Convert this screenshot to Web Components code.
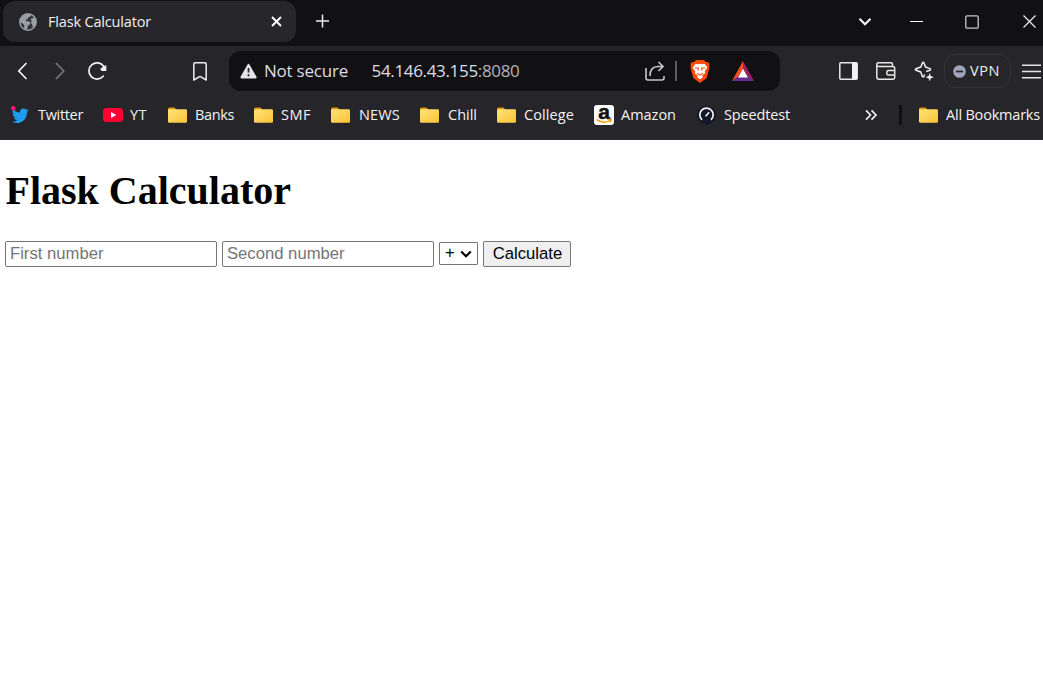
<!DOCTYPE html>
<html lang="en">
<head>
<meta charset="utf-8">
<title>Flask Calculator</title>
<style>
html,body{margin:0;width:100%;height:100%;overflow:hidden;background:#fff}
</style>
</head>
<body>
<browser-window></browser-window>
<script>
const F = '"Open Sans","Noto Sans",sans-serif';
const ICONS = {
globe:[18,18,'<circle cx="9" cy="9" r="8.2" fill="#333539" stroke="#9aa0a6" stroke-width="1.5"/><path d="M1 8.5 3.3 3.5 8 .8 12 1.4 11.8 3.2 9.3 4.2 9 6 7 6.4 7 8.2 10 8.2 11.6 10 10.3 12 8.8 12.4 8.4 15.4 6.8 16.6 5 15.5 5.4 12.5 3.8 10.4 1.6 9.7Z M13 5.3 16 5 17.2 9 15.6 13 13.8 14.6 13.2 11.8 11.8 9.5 12.8 8 11.6 6.6Z" fill="#9aa0a6"/>'],
x:[11,11,'<path d="m1 1 9 9m0-9-9 9" stroke="#fff" stroke-width="1.9"/>'],
plus:[14,14,'<path d="M7.500 .5v13M1 7h13" stroke="#eee" stroke-width="1.5"/>'],
chev:[14,10,'<path d="m1.5 1.8 5.5 5.5 5.5-5.5" fill="none" stroke="#f5f5f5" stroke-width="2.1"/>'],
min:[13,13,'<path d="M0 6.5h13" stroke="#fff"/>'],
max:[14,14,'<rect x=".8" y=".8" width="12.4" height="12.4" rx="1.3" fill="none" stroke="#c8c8c8" stroke-width="1.3"/>'],
close:[13,13,'<path d="m.5.5 12 12m0-12-12 12" stroke="#eee" stroke-width="1.2"/>'],
back:[10,18,'<path d="M9.500 1 1.800 9 9.500 17" fill="none" stroke="#f4f4f4" stroke-width="1.7"/>'],
fwd:[10,18,'<path d="m1 1 7.7 8L1 17" fill="none" stroke="#77777c" stroke-width="1.7"/>'],
reload:[20,20,'<path d="M16.200 15.2A8.100 8.100 0 1 1 16.800 5.500" fill="none" stroke="#f4f4f4" stroke-width="1.7" stroke-linecap="round"/><path d="M18.600 5v4.300h-3.500l-1-1.300Z" fill="#f4f4f4" stroke="#f4f4f4" stroke-width="1.500" stroke-linejoin="round"/>'],
mark:[14,19,'<path d="M.8 18V2Q.8.8 2 .8h10q1.200 0 1.200 1.200V18L7 14.400Z" fill="none" stroke="#eee" stroke-width="1.5" stroke-linejoin="round"/>'],
warn:[17,16,'<path d="M8.500 2 15.500 14.300H1.500Z" fill="#e3e3e8" stroke="#e3e3e8" stroke-width="2.200" stroke-linejoin="round"/><path d="M8.500 5v4.500m0 1.700v2" stroke="#222" stroke-width="1.700"/>'],
share:[20,20,'<path d="M1 7v10q0 2 2 2h14q2 0 2-2v-2" fill="none" stroke="#c9c9cc" stroke-width="1.600"/><path d="M5 15C5 9 8 5.500 13 5.500h5M13.500 1l4.500 4.500-4.500 4.500" fill="none" stroke="#c9c9cc" stroke-width="1.600"/>'],
brave:[20,23,'<path d="M6 0h8l2 2.200 2-.3 1.700 2-.7 2L19.600 7 16.700 18 10 23 3.300 18 .4 7 1 5.900.3 3.900l1.700-2 2 .3Z" fill="#fb4a0c"/><path d="M5.500 3.700 8 4.200 10 3.800l2 .4 2.500-.5 2.800 3.800-2.600 3.700.6 1.900-3.300 2.500L13 17l-3 2.300L7 17l1-1.200-3.300-2.500.6-1.900-2.600-3.700Z" fill="#fff"/><path d="m4.800 7.700 3.600.6-.5 2.400M15.200 7.700l-3.600.6.500 2.400M7 13.200l3 2 3-2" fill="none" stroke="#fb4a0c" stroke-width="1.100"/>'],
bat:[22,20,'<path d="M11 0v7.500L5.500 16.500 0 20Z" fill="#ff4c21"/><path d="m11 0 11 20-5.500-3.500L11 7.500Z" fill="#9e1f63"/><path d="M0 20 5.500 16h11L22 20Z" fill="#662d91"/><path d="m11 7.500 5 9H6Z" fill="#fff"/>'],
panel:[19,18,'<rect x=".8" y=".8" width="17.400" height="16.400" rx="1" fill="none" stroke="#e9e9e5" stroke-width="1.500"/><path d="M13 1h5v16h-5Z" fill="#f0f2f4"/>'],
wallet:[20,18,'<path d="M16.500 4.500V2q0-1.200-1.200-1.200H2.500Q.8.8.8 2.700V15q0 2.200 2.200 2.200h14q1.700 0 1.700-1.700v-9q0-2-1.700-2H2.700Q1 4.500.8 3M19 8.500h-6.500q-1.700 0-1.700 1.700v1.200q0 1.600 1.700 1.600H19" fill="none" stroke="#e9e9e5" stroke-width="1.500"/>'],
spark:[20,20,'<path d="M12.200 10.500 16 9.200q1.200-.8 0-1.600L11.500 6 10 1.900q-.8-1.300-1.600 0L6.800 6 2 7.700q-1.200.8 0 1.600L6.800 11l1.500 4.400q.8 1.300 1.600 0l.7-1.800" fill="none" stroke="#f0f0f0" stroke-width="1.500" stroke-linejoin="round"/><path d="m15.700 12 1.100 3.100 3.100 1.100-3.100 1.100-1.100 3-1.100-3-3.100-1.100 3.100-1.100Z" fill="#f0f0f0"/>'],
vpn:[13,13,'<circle cx="6.500" cy="6.500" r="6.300" fill="#a0a3bc"/><path d="M3 6.500h7" stroke="#26262b" stroke-width="1.700"/>'],
menu:[19,15,'<path d="M0 1.200h19M0 7.500h19M0 13.800h19" stroke="#e5e5e5" stroke-width="1.500"/>'],
bird:[18,17,'<path d="M17.700 4.200q-.8.500-1.900.6Q17 4 17.300 2.800q-1 .6-2.200.8C12.500 1.200 8.500 3 9 6.600Q5 6.300 2 3.200C.8 5.400 1.700 7.300 3.200 8.300q-.8 0-1.700-.4.200 2.700 3 3.700l-1.700.1q.8 2.200 3.500 2.500Q4 16 1 15.800C9 19.600 16 14.200 16 6.200q1-.8 1.700-2Z" fill="#1d9bf0"/><circle cx="2.300" cy="2.300" r="2.300" fill="#f91880"/>'],
yt:[20,14,'<rect width="20" height="14" rx="3.500" fill="#ff0033"/><path d="m8 4 5.300 3L8 10Z" fill="#fff"/>'],
folder:[19,16,'<path d="M0 2Q0 .5 1.500.5h5L9 3h8v5H0Z" fill="#dc9a0a"/><rect y="2.200" width="19" height="13.600" rx="1.300" fill="url(#g)"/><defs><linearGradient id="g" x2="1" y2="1"><stop stop-color="#ffe47c"/><stop offset="1" stop-color="#fbc235"/></linearGradient></defs>'],
amz:[20,20,'<rect width="20" height="20" rx="3" fill="#fff"/><text x="10" y="13.500" text-anchor="middle" font-family="Liberation Sans" font-weight="bold" font-size="21" fill="#111" stroke="#111" stroke-width=".5">a</text><path d="M2.500 14.700q7.500 4.500 14 .8M14.300 14.500l3-.1-.9 2.700" fill="none" stroke="#ff9900" stroke-width="1.400"/>'],
speed:[19,20,'<circle cx="9.500" cy="10" r="9.300" fill="#141629"/><path d="M5 14.800a6.700 6.700 0 1 1 9 0" fill="none" stroke="#f3f3f3" stroke-width="1.700"/><path d="m8.600 11.300 3.500-4" stroke="#f3f3f3" stroke-width="1.700"/>'],
more:[12,12,'<path d="m1 1.300 4.500 4.700L1 10.700M6.500 1.300 11 6l-4.500 4.700" fill="none" stroke="#eee" stroke-width="1.700"/>']
};
// Draws one named glyph.
customElements.define('browser-icon', class extends HTMLElement{
  connectedCallback(){
    if(this.shadowRoot) return;
    const [w,h,d]=ICONS[this.getAttribute('name')];
    this.attachShadow({mode:'open'}).innerHTML=`<style>:host{display:block;flex:none;width:${w}px;height:${h}px}svg{display:block;overflow:visible}</style><svg width="${w}" height="${h}" viewBox="0 0 ${w} ${h}">${d}</svg>`;
  }
});
// A single line label whose tracking adapts to the width it is given.
customElements.define('ui-label', class extends HTMLElement{
  connectedCallback(){
    if(this.shadowRoot) return;
    const w=+this.getAttribute('width'), s=this.getAttribute('size')||14.5;
    this.attachShadow({mode:'open'}).innerHTML=`<style>:host{display:block;flex:none;width:${w}px;font-size:${s}px;line-height:20px;white-space:nowrap}span{display:inline-block}</style><span><slot></slot></span>`;
    const e=this.shadowRoot.querySelector('span');
    e.style.letterSpacing=((w-e.getBoundingClientRect().width)/this.textContent.length)+'px';
  }
});
customElements.define('tab-strip', class extends HTMLElement{
  constructor(){super();this.attachShadow({mode:'open'}).innerHTML=`<style>
  :host{display:flex;height:46px;background:#111113;color:#f1f1f1;align-items:flex-start;box-sizing:border-box;padding:1px 0 0 3px}
  .tab{display:flex;align-items:center;width:293px;height:41px;box-sizing:border-box;padding:0 14px 0 16px;background:#27262b;border-radius:12px}
  .tab ui-label{margin-left:11px}.tab [name=x]{margin-left:auto}
  .add{margin:13px 0 0 19px}
  .controls{display:flex;align-items:center;height:41px;margin-left:529px}
  [name=min]{margin-left:38px}[name=max]{margin-left:42px}[name=close]{margin-left:44px}
  </style><div class="tab"><browser-icon name="globe"></browser-icon><ui-label width="103">Flask Calculator</ui-label><browser-icon name="x"></browser-icon></div>
  <browser-icon class="add" name="plus"></browser-icon>
  <div class="controls"><browser-icon name="chev"></browser-icon><browser-icon name="min"></browser-icon><browser-icon name="max"></browser-icon><browser-icon name="close"></browser-icon></div>`}
});
customElements.define('address-bar', class extends HTMLElement{
  constructor(){super();this.attachShadow({mode:'open'}).innerHTML=`<style>
  :host{display:flex;align-items:center;flex:none;box-sizing:border-box;width:551px;height:40px;border-radius:12px;background:#111113;padding-left:11px;color:#dedee3}
  .state{margin-left:7px}.url{margin-left:23.5px}.port{color:#b4b4ba}
  [name=share]{margin-left:125.5px}i{width:2px;height:20px;background:#5b5b60;margin-left:10px}[name=brave]{margin-left:13px}[name=bat]{margin-left:22px}
  </style><browser-icon name="warn"></browser-icon><ui-label class="state" width="84" size="17">Not secure</ui-label><ui-label class="url" width="148" size="17">54.146.43.155<span class="port">:8080</span></ui-label><browser-icon name="share"></browser-icon><i></i><browser-icon name="brave"></browser-icon><browser-icon name="bat"></browser-icon>`}
});
customElements.define('tool-bar', class extends HTMLElement{
  constructor(){super();this.attachShadow({mode:'open'}).innerHTML=`<style>
  :host{display:flex;align-items:center;height:50px;background:#26252a;padding-left:17px;color:#ededf2}
  [name=fwd]{margin-left:28px}[name=reload]{margin-left:22px}[name=mark]{margin-left:86px}address-bar{margin-left:22px}
  [name=panel]{margin-left:59px}[name=wallet]{margin-left:18px}[name=spark]{margin-left:18px}
  .vpn{display:flex;align-items:center;flex:none;box-sizing:border-box;width:67px;height:34px;border:1px solid #343439;border-radius:12px;margin-left:10px;padding-left:8px}
  .vpn ui-label{margin-left:4px}[name=menu]{margin-left:11px}
  </style><browser-icon name="back"></browser-icon><browser-icon name="fwd"></browser-icon><browser-icon name="reload"></browser-icon><browser-icon name="mark"></browser-icon><address-bar></address-bar><browser-icon name="panel"></browser-icon><browser-icon name="wallet"></browser-icon><browser-icon name="spark"></browser-icon><div class="vpn"><browser-icon name="vpn"></browser-icon><ui-label width="30">VPN</ui-label></div><browser-icon name="menu"></browser-icon>`}
});
customElements.define('book-mark', class extends HTMLElement{
  connectedCallback(){
    if(this.shadowRoot) return;
    const a=n=>this.getAttribute(n);
    this.attachShadow({mode:'open'}).innerHTML=`<style>:host{display:flex;flex:none;align-items:center;gap:${a('gap')||8}px}</style><browser-icon name="${a('icon')}"></browser-icon><ui-label width="${a('width')}">${a('label')}</ui-label>`;
  }
});
const marks=[['bird','Twitter',45,9,11],['yt','YT',17,7,20],['folder','Banks',39,8,21],['folder','SMF',30,8,20],['folder','NEWS',41,9,20],['folder','Chill',29,9,20],['folder','College',50,8,20],['amz','Amazon',55,7,20],['speed','Speedtest',66,8,21]];
customElements.define('bookmark-bar', class extends HTMLElement{
  constructor(){super();this.attachShadow({mode:'open'}).innerHTML=`<style>
  :host{display:flex;align-items:center;height:44px;box-sizing:border-box;padding-bottom:6px;background:#26252a;border-bottom:1px solid #2d2b30;color:#f3f3f3}
  [name=more]{margin-left:75px}i{width:3px;height:20px;background:#111113;margin-left:22px}.all{margin-left:17px}
  </style>${marks.map(([i,l,w,g,m])=>`<book-mark icon="${i}" label="${l}" width="${w}" gap="${g}" style="margin-left:${m}px"></book-mark>`).join('')}<browser-icon name="more"></browser-icon><i></i><book-mark class="all" icon="folder" label="All Bookmarks" width="94"></book-mark>`}
});
customElements.define('flask-calculator', class extends HTMLElement{
  constructor(){super();this.attachShadow({mode:'open'}).innerHTML=`<style>
  :host{display:block;background:#fff;color:#000;padding:28px 5px 0}
  h1{font:bold 40px/46px "Liberation Serif",serif;margin:0 0 27px .5px}
  form{display:flex;align-items:flex-start;gap:5px}
  input,button,select{box-sizing:border-box;margin:0;font:16.67px "Liberation Sans",sans-serif;border:1px solid #767676;border-radius:2px;color:#000}
  input{width:212px;height:26px;padding:1px 4px;background:#fff}input::placeholder{color:#757575}
  .pick{display:grid;margin-top:1px}.pick>*{grid-area:1/1}
  select{appearance:none;width:39px;height:23px;background:#fff;padding:0 0 2px 5px;border-radius:1px}
  svg{place-self:center end;margin-right:6px;pointer-events:none}
  button{width:88px;height:26px;padding:0 0 0 1px;background:#efefef;border-radius:2px}
  </style><h1>Flask Calculator</h1><form><input placeholder="First number"><input placeholder="Second number"><div class="pick"><select><option>+</option></select><svg width="12" height="8" viewBox="0 0 12 8"><path d="m1.200 1.500 4.800 4.800 4.800-4.800" fill="none" stroke="#000" stroke-width="2.100"/></svg></div><button type="button">Calculate</button></form>`}
});
customElements.define('browser-window', class extends HTMLElement{
  constructor(){super();this.attachShadow({mode:'open'}).innerHTML=`<style>:host{display:block;width:1043px;height:686px;overflow:hidden;font-family:${F}}</style><tab-strip></tab-strip><tool-bar></tool-bar><bookmark-bar></bookmark-bar><flask-calculator></flask-calculator>`}
});
</script>
</body>
</html>
